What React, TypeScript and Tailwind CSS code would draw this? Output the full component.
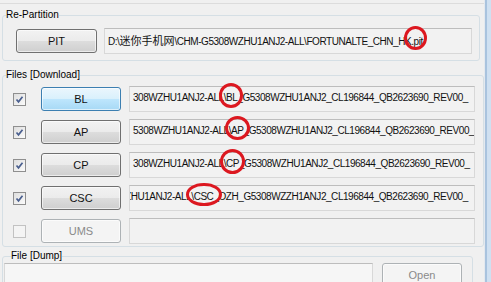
import React from "react";

const font = "font-['Liberation_Sans','Noto_Sans_CJK_SC',Arial,sans-serif]";

type Row = {
  label: string;
  checked: boolean;
  hot?: boolean;
  disabled?: boolean;
  pre?: string;
  mark?: string;
  post?: string;
  shift?: string;
  ring?: string;
};

const rows: Row[] = [
  {
    label: "BL",
    checked: true,
    hot: true,
    pre: "308WZHU1ANJ2-ALL",
    mark: "\\BL",
    post: "_G5308WZHU1ANJ2_CL196844_QB2623690_REV00_",
    ring: "-left-[5px] -right-[6px] -top-[8px] -bottom-[3px]",
  },
  {
    label: "AP",
    checked: true,
    pre: "5308WZHU1ANJ2-ALL",
    mark: "\\AP",
    post: "_G5308WZHU1ANJ2_CL196844_QB2623690_REV00_",
    ring: "-left-[4px] -right-[6px] -top-[8px] -bottom-[2px]",
  },
  {
    label: "CP",
    checked: true,
    pre: "308WZHU1ANJ2-ALL",
    mark: "\\CP",
    post: "_G5308WZHU1ANJ2_CL196844_QB2623690_REV00_",
    ring: "-left-[4px] -right-[6px] -top-[8px] -bottom-[3px]",
  },
  {
    label: "CSC",
    checked: true,
    pre: "ZHU1ANJ2-ALL",
    mark: "\\CSC_",
    post: "OZH_G5308WZZH1ANJ2_CL196844_QB2623690_REV00_",
    shift: "-ml-[8px]",
    ring: "-left-[5px] -right-[3px] -top-[7px] -bottom-[2px]",
  },
  { label: "UMS", checked: false, disabled: true },
];

function WinButton({ label, hot, disabled, className }: { label: string; hot?: boolean; disabled?: boolean; className: string }) {
  const skin = disabled
    ? "border-[#adb2b5] bg-[#f4f4f4] text-[#8a8a8a]"
    : hot
      ? "border-[#3c7fb1] bg-[linear-gradient(to_bottom,#eaf6fd_0%,#d9f0fc_50%,#bee6fd_50%,#a7d9f5_100%)] text-[#111]"
      : "border-[#707070] bg-[linear-gradient(to_bottom,#f2f2f2_0%,#ebebeb_50%,#dddddd_50%,#cfcfcf_100%)] text-[#111]";
  return (
    <div
      className={`flex shrink-0 items-center justify-center rounded-[3px] border text-[11px] shadow-[inset_0_0_0_1px_rgba(255,255,255,0.6)] ${skin} ${className}`}
    >
      {label}
    </div>
  );
}

function CheckBox({ checked, disabled }: { checked: boolean; disabled?: boolean }) {
  return (
    <div
      className={`flex h-[13px] w-[13px] shrink-0 items-center justify-center border ${
        disabled ? "border-[#c2c2c2] bg-[#f4f4f4]" : "border-[#8f8f8f] bg-[linear-gradient(135deg,#dedede,#fbfbfb)]"
      }`}
    >
      {checked && (
        <svg width="11" height="11" viewBox="0 0 11 11">
          <path d="M2.5 5.5 L4.5 7.8 L8.5 2.8" fill="none" stroke="#4a5f8f" strokeWidth="1.7" />
        </svg>
      )}
    </div>
  );
}

// hand-drawn style red ellipse over a piece of text
function Marked({ text, ring }: { text: string; ring: string }) {
  return (
    <span className="relative inline-block leading-[14px]">
      {text}
      <span className={`pointer-events-none absolute rounded-[50%] border-[3px] border-[#dc1820] ${ring}`} />
    </span>
  );
}

const boxSkin = "border border-[#d8d8d8] border-t-[#bdbdbd] bg-[#f2f2f2]";

export default function App() {
  return (
    <div className={`flex h-[282px] w-[491px] overflow-hidden bg-[#f0f0f0] text-black ${font}`}>
      <div className="flex w-[484px] shrink-0 flex-col">
        <div className="h-[4px] shrink-0 border-b border-[#dcdcdc]" />

        {/* Re-Partition */}
        <fieldset className="mt-[5px] ml-[2px] w-[478px] shrink-0 rounded-[3px] border border-[#d5dfe5]">
          <legend className="ml-[3px] text-[10px] leading-[12px]">Re-Partition</legend>
          <div className="flex items-center pt-[7px] pb-[6px] pl-[13px] pr-[7px]">
            <WinButton label="PIT" className="h-[24px] w-[81px]" />
            <div
              className={`ml-[7px] h-[26px] flex-1 overflow-x-clip whitespace-nowrap pl-[3px] pt-[5px] text-[10px] leading-[14px] tracking-[-0.45px] text-[#111] ${boxSkin}`}
            >
              D:\<span className="text-[11px] tracking-normal">迷你手机网</span>\CHM-G5308WZHU1ANJ2-ALL\FORTUNALTE_CHN_HK
              <Marked text=".pit" ring="-left-[7px] -right-[4px] -top-[9px] -bottom-[1px]" />
            </div>
          </div>
        </fieldset>

        {/* Files [Download] */}
        <fieldset className="mt-[8px] ml-[2px] w-[478px] shrink-0 rounded-[3px] border border-[#d5dfe5]">
          <legend className="ml-[3px] text-[10px] leading-[12px]">Files [Download]</legend>
          <div className="flex flex-col gap-[7px] pt-[5px] pb-[2px] pl-[10px] pr-[8px]">
            {rows.map((r) => (
              <div key={r.label} className="flex h-[26px] items-center">
                <CheckBox checked={r.checked} disabled={r.disabled} />
                <WinButton label={r.label} hot={r.hot} disabled={r.disabled} className="ml-[15px] h-[24px] w-[80px]" />
                <div
                  className={`ml-[8px] h-[26px] flex-1 overflow-x-clip whitespace-nowrap pl-[3px] pt-[4px] text-[10px] leading-[14px] tracking-[-0.45px] text-[#111] ${boxSkin}`}
                >
                  {r.pre && (
                    <span className={`inline-block ${r.shift ?? ""}`}>
                      {r.pre}
                      <Marked text={r.mark ?? ""} ring={r.ring ?? ""} />
                      {r.post}
                    </span>
                  )}
                </div>
              </div>
            ))}
          </div>
        </fieldset>

        {/* File [Dump] */}
        <fieldset className="mt-[3px] ml-[2px] w-[471px] shrink-0 rounded-[3px] border border-[#d5dfe5]">
          <legend className="ml-[8px] text-[10px] leading-[12px]">File [Dump]</legend>
          <div className="flex items-start pt-[1px] pl-[1px]">
            <div className={`h-[26px] w-[369px] ${boxSkin} bg-[#f6f6f6]`} />
            <WinButton label="Open" disabled className="ml-[9px] h-[24px] w-[80px]" />
          </div>
        </fieldset>
      </div>

      {/* window frame at the right */}
      <div className="flex flex-1">
        <div className="w-[1px] bg-[#e4e9ef]" />
        <div className="w-[2px] bg-[#a9c3de]" />
        <div className="flex-1 bg-[#cfe0f1]" />
      </div>
    </div>
  );
}
